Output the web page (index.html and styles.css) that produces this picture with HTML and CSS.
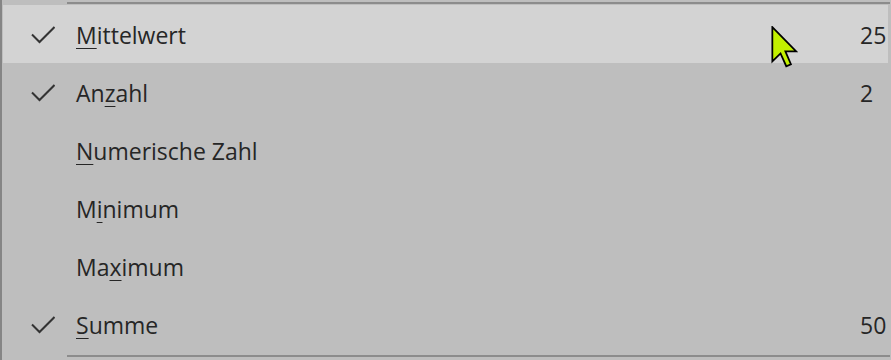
FILE: index.html
```html
<!DOCTYPE html>
<html lang="de">
<head>
<meta charset="utf-8">
<link rel="stylesheet" href="styles.css">
</head>
<body>
<div class="menu">
  <div class="sep"></div>
  <div class="list">
    <div class="item hover"><span class="check"><svg viewBox="0 0 24 18" width="24" height="18"><path d="M1 8.5 L8.5 16 L23.5 1" fill="none" stroke="#333" stroke-width="2"/></svg></span><span class="label"><u>M</u>ittelwert</span><span class="value">25</span></div>
    <div class="item"><span class="check"><svg viewBox="0 0 24 18" width="24" height="18"><path d="M1 8.5 L8.5 16 L23.5 1" fill="none" stroke="#333" stroke-width="2"/></svg></span><span class="label">An<u>z</u>ahl</span><span class="value">2</span></div>
    <div class="item"><span class="check"></span><span class="label"><u>N</u>umerische Zahl</span><span class="value"></span></div>
    <div class="item"><span class="check"></span><span class="label">M<u>i</u>nimum</span><span class="value"></span></div>
    <div class="item"><span class="check"></span><span class="label">Ma<u>x</u>imum</span><span class="value"></span></div>
    <div class="item"><span class="check"><svg viewBox="0 0 24 18" width="24" height="18"><path d="M1 8.5 L8.5 16 L23.5 1" fill="none" stroke="#333" stroke-width="2"/></svg></span><span class="label"><u>S</u>umme</span><span class="value">50</span></div>
  </div>
  <div class="sep bottom"></div>
  <svg class="cursor" viewBox="0 0 12 19" width="27" height="42"><path d="M0.5 0.5 L0.5 16 L4.2 12.4 L6.8 18.2 L8.9 17.3 L6.4 11.5 L11.3 11.5 Z" fill="#c2f000" stroke="#000" stroke-width="0.8" stroke-linejoin="miter"/></svg>
</div>
</body>
</html>
```
FILE: styles.css
```css
html, body {
  margin: 0;
  padding: 0;
  background: #bebebe;
}
body {
  width: 891px;
  height: 360px;
  overflow: hidden;
}
.menu {
  position: relative;
  height: 360px;
  border-left: 2px solid #858585;
  padding: 2px 3px 0 1px;
  box-sizing: border-box;
  font-family: "Open Sans", "Noto Sans", sans-serif;
  font-size: 23px;
  color: #262626;
}
.sep {
  height: 2px;
  background: #8c8c8c;
  margin-left: 64px;
  margin-right: -2px;
}
.list {
  margin-top: 1px;
  display: flex;
  flex-direction: column;
}
.sep.bottom {
  margin-top: 2px;
}
.item {
  height: 58px;
  display: flex;
  align-items: center;
}
.item.hover {
  background: #d3d3d3;
}
.check {
  width: 73px;
  flex: none;
  display: flex;
  align-items: center;
  padding-left: 28px;
  box-sizing: border-box;
  padding-top: 1px;
}
.check svg {
  display: block;
}
.label {
  flex: 1;
  padding-top: 1px;
}
.label u {
  text-decoration: underline;
  text-decoration-thickness: 1px;
  text-underline-offset: 4px;
}
.value {
  width: 28px;
  flex: none;
  padding-top: 1px;
}
.cursor {
  position: absolute;
  left: 769px;
  top: 26px;
}
```
